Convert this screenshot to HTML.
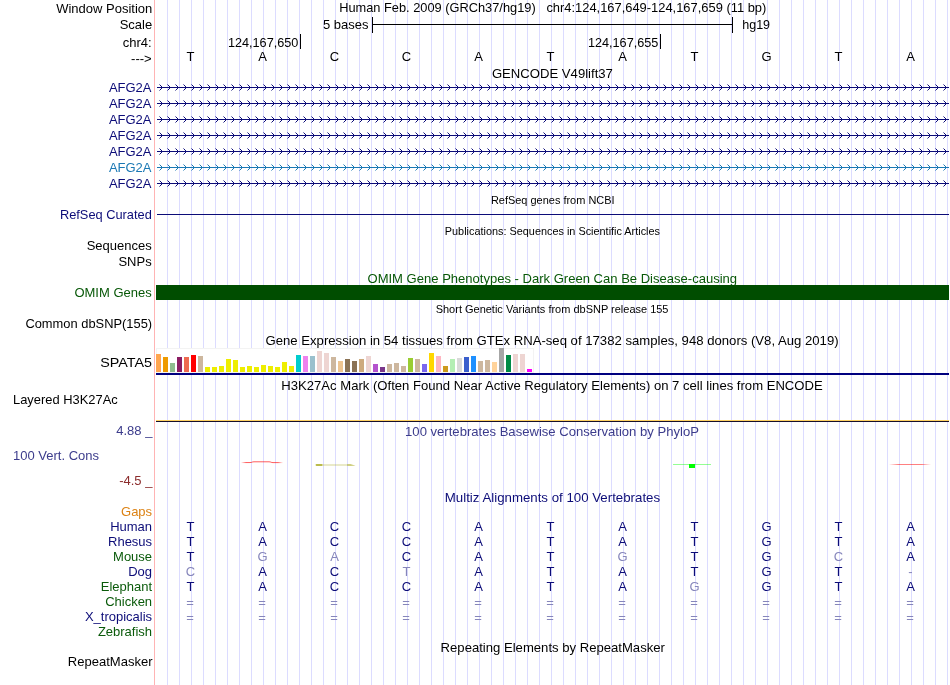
<!DOCTYPE html>
<html lang="en"><head><meta charset="utf-8"><title>UCSC Genome Browser chr4:124,167,649-124,167,659</title>
<style>
html,body{margin:0;padding:0;background:#fff;}
body{width:950px;height:685px;overflow:hidden;}
svg{display:block;will-change:transform;font-family:"Liberation Sans",Arial,Helvetica,sans-serif;font-size:13px;}
.g{fill:#dcdcff;shape-rendering:crispEdges;}
.c{shape-rendering:crispEdges;}
.r{text-anchor:end;}
.m{text-anchor:middle;}
.s{font-size:11px;}
</style></head><body>
<svg width="950" height="685" viewBox="0 0 950 685">
<rect width="950" height="685" fill="#fff"/>
<g class="g">
<rect x="167" y="0" width="1" height="685"/>
<rect x="179" y="0" width="1" height="685"/>
<rect x="191" y="0" width="1" height="685"/>
<rect x="203" y="0" width="1" height="685"/>
<rect x="215" y="0" width="1" height="685"/>
<rect x="227" y="0" width="1" height="685"/>
<rect x="239" y="0" width="1" height="685"/>
<rect x="251" y="0" width="1" height="685"/>
<rect x="263" y="0" width="1" height="685"/>
<rect x="275" y="0" width="1" height="685"/>
<rect x="287" y="0" width="1" height="685"/>
<rect x="299" y="0" width="1" height="685"/>
<rect x="311" y="0" width="1" height="685"/>
<rect x="323" y="0" width="1" height="685"/>
<rect x="335" y="0" width="1" height="685"/>
<rect x="347" y="0" width="1" height="685"/>
<rect x="359" y="0" width="1" height="685"/>
<rect x="371" y="0" width="1" height="685"/>
<rect x="383" y="0" width="1" height="685"/>
<rect x="395" y="0" width="1" height="685"/>
<rect x="407" y="0" width="1" height="685"/>
<rect x="419" y="0" width="1" height="685"/>
<rect x="431" y="0" width="1" height="685"/>
<rect x="443" y="0" width="1" height="685"/>
<rect x="455" y="0" width="1" height="685"/>
<rect x="467" y="0" width="1" height="685"/>
<rect x="479" y="0" width="1" height="685"/>
<rect x="491" y="0" width="1" height="685"/>
<rect x="503" y="0" width="1" height="685"/>
<rect x="515" y="0" width="1" height="685"/>
<rect x="527" y="0" width="1" height="685"/>
<rect x="539" y="0" width="1" height="685"/>
<rect x="551" y="0" width="1" height="685"/>
<rect x="563" y="0" width="1" height="685"/>
<rect x="575" y="0" width="1" height="685"/>
<rect x="587" y="0" width="1" height="685"/>
<rect x="599" y="0" width="1" height="685"/>
<rect x="611" y="0" width="1" height="685"/>
<rect x="623" y="0" width="1" height="685"/>
<rect x="635" y="0" width="1" height="685"/>
<rect x="647" y="0" width="1" height="685"/>
<rect x="659" y="0" width="1" height="685"/>
<rect x="671" y="0" width="1" height="685"/>
<rect x="683" y="0" width="1" height="685"/>
<rect x="695" y="0" width="1" height="685"/>
<rect x="707" y="0" width="1" height="685"/>
<rect x="719" y="0" width="1" height="685"/>
<rect x="731" y="0" width="1" height="685"/>
<rect x="743" y="0" width="1" height="685"/>
<rect x="755" y="0" width="1" height="685"/>
<rect x="767" y="0" width="1" height="685"/>
<rect x="779" y="0" width="1" height="685"/>
<rect x="791" y="0" width="1" height="685"/>
<rect x="803" y="0" width="1" height="685"/>
<rect x="815" y="0" width="1" height="685"/>
<rect x="827" y="0" width="1" height="685"/>
<rect x="839" y="0" width="1" height="685"/>
<rect x="851" y="0" width="1" height="685"/>
<rect x="863" y="0" width="1" height="685"/>
<rect x="875" y="0" width="1" height="685"/>
<rect x="887" y="0" width="1" height="685"/>
<rect x="899" y="0" width="1" height="685"/>
<rect x="911" y="0" width="1" height="685"/>
<rect x="923" y="0" width="1" height="685"/>
<rect x="935" y="0" width="1" height="685"/>
<rect x="947" y="0" width="1" height="685"/>
</g>
<rect class="c" x="154" y="0" width="1" height="685" fill="#ffb4b4"/>
<text class="r" x="152.3" y="13" fill="#000">Window Position</text>
<text class="r" x="152.2" y="29" fill="#000">Scale</text>
<text class="r" x="151.7" y="47" fill="#000">chr4:</text>
<text class="r" x="151.7" y="63" fill="#000">---&gt;</text>
<text x="339.2" y="12" fill="#000" textLength="196.5" lengthAdjust="spacingAndGlyphs">Human Feb. 2009 (GRCh37/hg19)</text>
<text x="546.4" y="12" fill="#000" textLength="219.9" lengthAdjust="spacingAndGlyphs">chr4:124,167,649-124,167,659 (11 bp)</text>
<text x="368.5" y="29" class="r">5 bases</text>
<text x="742.2" y="29" fill="#000" textLength="27.9" lengthAdjust="spacingAndGlyphs">hg19</text>
<g class="c" fill="#000">
<rect x="372" y="24" width="361" height="1"/>
<rect x="372" y="17" width="1" height="16"/>
<rect x="732" y="17" width="1" height="16"/>
<rect x="300" y="34" width="1" height="15"/>
<rect x="660" y="34" width="1" height="15"/>
</g>
<text x="227.9" y="47" fill="#000" textLength="70.5" lengthAdjust="spacingAndGlyphs">124,167,650</text>
<text x="587.9" y="47" fill="#000" textLength="70.5" lengthAdjust="spacingAndGlyphs">124,167,655</text>
<text class="m" x="190.5" y="61" fill="#000">T</text>
<text class="m" x="262.5" y="61" fill="#000">A</text>
<text class="m" x="334.5" y="61" fill="#000">C</text>
<text class="m" x="406.5" y="61" fill="#000">C</text>
<text class="m" x="478.5" y="61" fill="#000">A</text>
<text class="m" x="550.5" y="61" fill="#000">T</text>
<text class="m" x="622.5" y="61" fill="#000">A</text>
<text class="m" x="694.5" y="61" fill="#000">T</text>
<text class="m" x="766.5" y="61" fill="#000">G</text>
<text class="m" x="838.5" y="61" fill="#000">T</text>
<text class="m" x="910.5" y="61" fill="#000">A</text>
<text x="491.9" y="78" fill="#000" textLength="121.0" lengthAdjust="spacingAndGlyphs">GENCODE V49lift37</text>
<text class="r" x="151.5" y="92" fill="#0c0c78">AFG2A</text>
<rect class="c" x="157" y="87" width="792" height="1" fill="#0c0c78"/>
<path d="M159 84L162 87L159 90M167 84L170 87L167 90M175 84L178 87L175 90M183 84L186 87L183 90M191 84L194 87L191 90M199 84L202 87L199 90M207 84L210 87L207 90M215 84L218 87L215 90M223 84L226 87L223 90M231 84L234 87L231 90M239 84L242 87L239 90M247 84L250 87L247 90M255 84L258 87L255 90M263 84L266 87L263 90M271 84L274 87L271 90M279 84L282 87L279 90M287 84L290 87L287 90M295 84L298 87L295 90M303 84L306 87L303 90M311 84L314 87L311 90M319 84L322 87L319 90M327 84L330 87L327 90M335 84L338 87L335 90M343 84L346 87L343 90M351 84L354 87L351 90M359 84L362 87L359 90M367 84L370 87L367 90M375 84L378 87L375 90M383 84L386 87L383 90M391 84L394 87L391 90M399 84L402 87L399 90M407 84L410 87L407 90M415 84L418 87L415 90M423 84L426 87L423 90M431 84L434 87L431 90M439 84L442 87L439 90M447 84L450 87L447 90M455 84L458 87L455 90M463 84L466 87L463 90M471 84L474 87L471 90M479 84L482 87L479 90M487 84L490 87L487 90M495 84L498 87L495 90M503 84L506 87L503 90M511 84L514 87L511 90M519 84L522 87L519 90M527 84L530 87L527 90M535 84L538 87L535 90M543 84L546 87L543 90M551 84L554 87L551 90M559 84L562 87L559 90M567 84L570 87L567 90M575 84L578 87L575 90M583 84L586 87L583 90M591 84L594 87L591 90M599 84L602 87L599 90M607 84L610 87L607 90M615 84L618 87L615 90M623 84L626 87L623 90M631 84L634 87L631 90M639 84L642 87L639 90M647 84L650 87L647 90M655 84L658 87L655 90M663 84L666 87L663 90M671 84L674 87L671 90M679 84L682 87L679 90M687 84L690 87L687 90M695 84L698 87L695 90M703 84L706 87L703 90M711 84L714 87L711 90M719 84L722 87L719 90M727 84L730 87L727 90M735 84L738 87L735 90M743 84L746 87L743 90M751 84L754 87L751 90M759 84L762 87L759 90M767 84L770 87L767 90M775 84L778 87L775 90M783 84L786 87L783 90M791 84L794 87L791 90M799 84L802 87L799 90M807 84L810 87L807 90M815 84L818 87L815 90M823 84L826 87L823 90M831 84L834 87L831 90M839 84L842 87L839 90M847 84L850 87L847 90M855 84L858 87L855 90M863 84L866 87L863 90M871 84L874 87L871 90M879 84L882 87L879 90M887 84L890 87L887 90M895 84L898 87L895 90M903 84L906 87L903 90M911 84L914 87L911 90M919 84L922 87L919 90M927 84L930 87L927 90M935 84L938 87L935 90M943 84L946 87L943 90" transform="translate(0.5,0.5)" fill="none" stroke="#0c0c78" stroke-width="1"/>
<text class="r" x="151.5" y="108" fill="#0c0c78">AFG2A</text>
<rect class="c" x="157" y="103" width="792" height="1" fill="#0c0c78"/>
<path d="M159 100L162 103L159 106M167 100L170 103L167 106M175 100L178 103L175 106M183 100L186 103L183 106M191 100L194 103L191 106M199 100L202 103L199 106M207 100L210 103L207 106M215 100L218 103L215 106M223 100L226 103L223 106M231 100L234 103L231 106M239 100L242 103L239 106M247 100L250 103L247 106M255 100L258 103L255 106M263 100L266 103L263 106M271 100L274 103L271 106M279 100L282 103L279 106M287 100L290 103L287 106M295 100L298 103L295 106M303 100L306 103L303 106M311 100L314 103L311 106M319 100L322 103L319 106M327 100L330 103L327 106M335 100L338 103L335 106M343 100L346 103L343 106M351 100L354 103L351 106M359 100L362 103L359 106M367 100L370 103L367 106M375 100L378 103L375 106M383 100L386 103L383 106M391 100L394 103L391 106M399 100L402 103L399 106M407 100L410 103L407 106M415 100L418 103L415 106M423 100L426 103L423 106M431 100L434 103L431 106M439 100L442 103L439 106M447 100L450 103L447 106M455 100L458 103L455 106M463 100L466 103L463 106M471 100L474 103L471 106M479 100L482 103L479 106M487 100L490 103L487 106M495 100L498 103L495 106M503 100L506 103L503 106M511 100L514 103L511 106M519 100L522 103L519 106M527 100L530 103L527 106M535 100L538 103L535 106M543 100L546 103L543 106M551 100L554 103L551 106M559 100L562 103L559 106M567 100L570 103L567 106M575 100L578 103L575 106M583 100L586 103L583 106M591 100L594 103L591 106M599 100L602 103L599 106M607 100L610 103L607 106M615 100L618 103L615 106M623 100L626 103L623 106M631 100L634 103L631 106M639 100L642 103L639 106M647 100L650 103L647 106M655 100L658 103L655 106M663 100L666 103L663 106M671 100L674 103L671 106M679 100L682 103L679 106M687 100L690 103L687 106M695 100L698 103L695 106M703 100L706 103L703 106M711 100L714 103L711 106M719 100L722 103L719 106M727 100L730 103L727 106M735 100L738 103L735 106M743 100L746 103L743 106M751 100L754 103L751 106M759 100L762 103L759 106M767 100L770 103L767 106M775 100L778 103L775 106M783 100L786 103L783 106M791 100L794 103L791 106M799 100L802 103L799 106M807 100L810 103L807 106M815 100L818 103L815 106M823 100L826 103L823 106M831 100L834 103L831 106M839 100L842 103L839 106M847 100L850 103L847 106M855 100L858 103L855 106M863 100L866 103L863 106M871 100L874 103L871 106M879 100L882 103L879 106M887 100L890 103L887 106M895 100L898 103L895 106M903 100L906 103L903 106M911 100L914 103L911 106M919 100L922 103L919 106M927 100L930 103L927 106M935 100L938 103L935 106M943 100L946 103L943 106" transform="translate(0.5,0.5)" fill="none" stroke="#0c0c78" stroke-width="1"/>
<text class="r" x="151.5" y="124" fill="#0c0c78">AFG2A</text>
<rect class="c" x="157" y="119" width="792" height="1" fill="#0c0c78"/>
<path d="M159 116L162 119L159 122M167 116L170 119L167 122M175 116L178 119L175 122M183 116L186 119L183 122M191 116L194 119L191 122M199 116L202 119L199 122M207 116L210 119L207 122M215 116L218 119L215 122M223 116L226 119L223 122M231 116L234 119L231 122M239 116L242 119L239 122M247 116L250 119L247 122M255 116L258 119L255 122M263 116L266 119L263 122M271 116L274 119L271 122M279 116L282 119L279 122M287 116L290 119L287 122M295 116L298 119L295 122M303 116L306 119L303 122M311 116L314 119L311 122M319 116L322 119L319 122M327 116L330 119L327 122M335 116L338 119L335 122M343 116L346 119L343 122M351 116L354 119L351 122M359 116L362 119L359 122M367 116L370 119L367 122M375 116L378 119L375 122M383 116L386 119L383 122M391 116L394 119L391 122M399 116L402 119L399 122M407 116L410 119L407 122M415 116L418 119L415 122M423 116L426 119L423 122M431 116L434 119L431 122M439 116L442 119L439 122M447 116L450 119L447 122M455 116L458 119L455 122M463 116L466 119L463 122M471 116L474 119L471 122M479 116L482 119L479 122M487 116L490 119L487 122M495 116L498 119L495 122M503 116L506 119L503 122M511 116L514 119L511 122M519 116L522 119L519 122M527 116L530 119L527 122M535 116L538 119L535 122M543 116L546 119L543 122M551 116L554 119L551 122M559 116L562 119L559 122M567 116L570 119L567 122M575 116L578 119L575 122M583 116L586 119L583 122M591 116L594 119L591 122M599 116L602 119L599 122M607 116L610 119L607 122M615 116L618 119L615 122M623 116L626 119L623 122M631 116L634 119L631 122M639 116L642 119L639 122M647 116L650 119L647 122M655 116L658 119L655 122M663 116L666 119L663 122M671 116L674 119L671 122M679 116L682 119L679 122M687 116L690 119L687 122M695 116L698 119L695 122M703 116L706 119L703 122M711 116L714 119L711 122M719 116L722 119L719 122M727 116L730 119L727 122M735 116L738 119L735 122M743 116L746 119L743 122M751 116L754 119L751 122M759 116L762 119L759 122M767 116L770 119L767 122M775 116L778 119L775 122M783 116L786 119L783 122M791 116L794 119L791 122M799 116L802 119L799 122M807 116L810 119L807 122M815 116L818 119L815 122M823 116L826 119L823 122M831 116L834 119L831 122M839 116L842 119L839 122M847 116L850 119L847 122M855 116L858 119L855 122M863 116L866 119L863 122M871 116L874 119L871 122M879 116L882 119L879 122M887 116L890 119L887 122M895 116L898 119L895 122M903 116L906 119L903 122M911 116L914 119L911 122M919 116L922 119L919 122M927 116L930 119L927 122M935 116L938 119L935 122M943 116L946 119L943 122" transform="translate(0.5,0.5)" fill="none" stroke="#0c0c78" stroke-width="1"/>
<text class="r" x="151.5" y="140" fill="#0c0c78">AFG2A</text>
<rect class="c" x="157" y="135" width="792" height="1" fill="#0c0c78"/>
<path d="M159 132L162 135L159 138M167 132L170 135L167 138M175 132L178 135L175 138M183 132L186 135L183 138M191 132L194 135L191 138M199 132L202 135L199 138M207 132L210 135L207 138M215 132L218 135L215 138M223 132L226 135L223 138M231 132L234 135L231 138M239 132L242 135L239 138M247 132L250 135L247 138M255 132L258 135L255 138M263 132L266 135L263 138M271 132L274 135L271 138M279 132L282 135L279 138M287 132L290 135L287 138M295 132L298 135L295 138M303 132L306 135L303 138M311 132L314 135L311 138M319 132L322 135L319 138M327 132L330 135L327 138M335 132L338 135L335 138M343 132L346 135L343 138M351 132L354 135L351 138M359 132L362 135L359 138M367 132L370 135L367 138M375 132L378 135L375 138M383 132L386 135L383 138M391 132L394 135L391 138M399 132L402 135L399 138M407 132L410 135L407 138M415 132L418 135L415 138M423 132L426 135L423 138M431 132L434 135L431 138M439 132L442 135L439 138M447 132L450 135L447 138M455 132L458 135L455 138M463 132L466 135L463 138M471 132L474 135L471 138M479 132L482 135L479 138M487 132L490 135L487 138M495 132L498 135L495 138M503 132L506 135L503 138M511 132L514 135L511 138M519 132L522 135L519 138M527 132L530 135L527 138M535 132L538 135L535 138M543 132L546 135L543 138M551 132L554 135L551 138M559 132L562 135L559 138M567 132L570 135L567 138M575 132L578 135L575 138M583 132L586 135L583 138M591 132L594 135L591 138M599 132L602 135L599 138M607 132L610 135L607 138M615 132L618 135L615 138M623 132L626 135L623 138M631 132L634 135L631 138M639 132L642 135L639 138M647 132L650 135L647 138M655 132L658 135L655 138M663 132L666 135L663 138M671 132L674 135L671 138M679 132L682 135L679 138M687 132L690 135L687 138M695 132L698 135L695 138M703 132L706 135L703 138M711 132L714 135L711 138M719 132L722 135L719 138M727 132L730 135L727 138M735 132L738 135L735 138M743 132L746 135L743 138M751 132L754 135L751 138M759 132L762 135L759 138M767 132L770 135L767 138M775 132L778 135L775 138M783 132L786 135L783 138M791 132L794 135L791 138M799 132L802 135L799 138M807 132L810 135L807 138M815 132L818 135L815 138M823 132L826 135L823 138M831 132L834 135L831 138M839 132L842 135L839 138M847 132L850 135L847 138M855 132L858 135L855 138M863 132L866 135L863 138M871 132L874 135L871 138M879 132L882 135L879 138M887 132L890 135L887 138M895 132L898 135L895 138M903 132L906 135L903 138M911 132L914 135L911 138M919 132L922 135L919 138M927 132L930 135L927 138M935 132L938 135L935 138M943 132L946 135L943 138" transform="translate(0.5,0.5)" fill="none" stroke="#0c0c78" stroke-width="1"/>
<text class="r" x="151.5" y="156" fill="#0c0c78">AFG2A</text>
<rect class="c" x="157" y="151" width="792" height="1" fill="#0c0c78"/>
<path d="M159 148L162 151L159 154M167 148L170 151L167 154M175 148L178 151L175 154M183 148L186 151L183 154M191 148L194 151L191 154M199 148L202 151L199 154M207 148L210 151L207 154M215 148L218 151L215 154M223 148L226 151L223 154M231 148L234 151L231 154M239 148L242 151L239 154M247 148L250 151L247 154M255 148L258 151L255 154M263 148L266 151L263 154M271 148L274 151L271 154M279 148L282 151L279 154M287 148L290 151L287 154M295 148L298 151L295 154M303 148L306 151L303 154M311 148L314 151L311 154M319 148L322 151L319 154M327 148L330 151L327 154M335 148L338 151L335 154M343 148L346 151L343 154M351 148L354 151L351 154M359 148L362 151L359 154M367 148L370 151L367 154M375 148L378 151L375 154M383 148L386 151L383 154M391 148L394 151L391 154M399 148L402 151L399 154M407 148L410 151L407 154M415 148L418 151L415 154M423 148L426 151L423 154M431 148L434 151L431 154M439 148L442 151L439 154M447 148L450 151L447 154M455 148L458 151L455 154M463 148L466 151L463 154M471 148L474 151L471 154M479 148L482 151L479 154M487 148L490 151L487 154M495 148L498 151L495 154M503 148L506 151L503 154M511 148L514 151L511 154M519 148L522 151L519 154M527 148L530 151L527 154M535 148L538 151L535 154M543 148L546 151L543 154M551 148L554 151L551 154M559 148L562 151L559 154M567 148L570 151L567 154M575 148L578 151L575 154M583 148L586 151L583 154M591 148L594 151L591 154M599 148L602 151L599 154M607 148L610 151L607 154M615 148L618 151L615 154M623 148L626 151L623 154M631 148L634 151L631 154M639 148L642 151L639 154M647 148L650 151L647 154M655 148L658 151L655 154M663 148L666 151L663 154M671 148L674 151L671 154M679 148L682 151L679 154M687 148L690 151L687 154M695 148L698 151L695 154M703 148L706 151L703 154M711 148L714 151L711 154M719 148L722 151L719 154M727 148L730 151L727 154M735 148L738 151L735 154M743 148L746 151L743 154M751 148L754 151L751 154M759 148L762 151L759 154M767 148L770 151L767 154M775 148L778 151L775 154M783 148L786 151L783 154M791 148L794 151L791 154M799 148L802 151L799 154M807 148L810 151L807 154M815 148L818 151L815 154M823 148L826 151L823 154M831 148L834 151L831 154M839 148L842 151L839 154M847 148L850 151L847 154M855 148L858 151L855 154M863 148L866 151L863 154M871 148L874 151L871 154M879 148L882 151L879 154M887 148L890 151L887 154M895 148L898 151L895 154M903 148L906 151L903 154M911 148L914 151L911 154M919 148L922 151L919 154M927 148L930 151L927 154M935 148L938 151L935 154M943 148L946 151L943 154" transform="translate(0.5,0.5)" fill="none" stroke="#0c0c78" stroke-width="1"/>
<text class="r" x="151.5" y="172" fill="#1a78b4">AFG2A</text>
<rect class="c" x="157" y="167" width="792" height="1" fill="#1a78b4"/>
<path d="M159 164L162 167L159 170M167 164L170 167L167 170M175 164L178 167L175 170M183 164L186 167L183 170M191 164L194 167L191 170M199 164L202 167L199 170M207 164L210 167L207 170M215 164L218 167L215 170M223 164L226 167L223 170M231 164L234 167L231 170M239 164L242 167L239 170M247 164L250 167L247 170M255 164L258 167L255 170M263 164L266 167L263 170M271 164L274 167L271 170M279 164L282 167L279 170M287 164L290 167L287 170M295 164L298 167L295 170M303 164L306 167L303 170M311 164L314 167L311 170M319 164L322 167L319 170M327 164L330 167L327 170M335 164L338 167L335 170M343 164L346 167L343 170M351 164L354 167L351 170M359 164L362 167L359 170M367 164L370 167L367 170M375 164L378 167L375 170M383 164L386 167L383 170M391 164L394 167L391 170M399 164L402 167L399 170M407 164L410 167L407 170M415 164L418 167L415 170M423 164L426 167L423 170M431 164L434 167L431 170M439 164L442 167L439 170M447 164L450 167L447 170M455 164L458 167L455 170M463 164L466 167L463 170M471 164L474 167L471 170M479 164L482 167L479 170M487 164L490 167L487 170M495 164L498 167L495 170M503 164L506 167L503 170M511 164L514 167L511 170M519 164L522 167L519 170M527 164L530 167L527 170M535 164L538 167L535 170M543 164L546 167L543 170M551 164L554 167L551 170M559 164L562 167L559 170M567 164L570 167L567 170M575 164L578 167L575 170M583 164L586 167L583 170M591 164L594 167L591 170M599 164L602 167L599 170M607 164L610 167L607 170M615 164L618 167L615 170M623 164L626 167L623 170M631 164L634 167L631 170M639 164L642 167L639 170M647 164L650 167L647 170M655 164L658 167L655 170M663 164L666 167L663 170M671 164L674 167L671 170M679 164L682 167L679 170M687 164L690 167L687 170M695 164L698 167L695 170M703 164L706 167L703 170M711 164L714 167L711 170M719 164L722 167L719 170M727 164L730 167L727 170M735 164L738 167L735 170M743 164L746 167L743 170M751 164L754 167L751 170M759 164L762 167L759 170M767 164L770 167L767 170M775 164L778 167L775 170M783 164L786 167L783 170M791 164L794 167L791 170M799 164L802 167L799 170M807 164L810 167L807 170M815 164L818 167L815 170M823 164L826 167L823 170M831 164L834 167L831 170M839 164L842 167L839 170M847 164L850 167L847 170M855 164L858 167L855 170M863 164L866 167L863 170M871 164L874 167L871 170M879 164L882 167L879 170M887 164L890 167L887 170M895 164L898 167L895 170M903 164L906 167L903 170M911 164L914 167L911 170M919 164L922 167L919 170M927 164L930 167L927 170M935 164L938 167L935 170M943 164L946 167L943 170" transform="translate(0.5,0.5)" fill="none" stroke="#1a78b4" stroke-width="1"/>
<text class="r" x="151.5" y="188" fill="#0c0c78">AFG2A</text>
<rect class="c" x="157" y="183" width="792" height="1" fill="#0c0c78"/>
<path d="M159 180L162 183L159 186M167 180L170 183L167 186M175 180L178 183L175 186M183 180L186 183L183 186M191 180L194 183L191 186M199 180L202 183L199 186M207 180L210 183L207 186M215 180L218 183L215 186M223 180L226 183L223 186M231 180L234 183L231 186M239 180L242 183L239 186M247 180L250 183L247 186M255 180L258 183L255 186M263 180L266 183L263 186M271 180L274 183L271 186M279 180L282 183L279 186M287 180L290 183L287 186M295 180L298 183L295 186M303 180L306 183L303 186M311 180L314 183L311 186M319 180L322 183L319 186M327 180L330 183L327 186M335 180L338 183L335 186M343 180L346 183L343 186M351 180L354 183L351 186M359 180L362 183L359 186M367 180L370 183L367 186M375 180L378 183L375 186M383 180L386 183L383 186M391 180L394 183L391 186M399 180L402 183L399 186M407 180L410 183L407 186M415 180L418 183L415 186M423 180L426 183L423 186M431 180L434 183L431 186M439 180L442 183L439 186M447 180L450 183L447 186M455 180L458 183L455 186M463 180L466 183L463 186M471 180L474 183L471 186M479 180L482 183L479 186M487 180L490 183L487 186M495 180L498 183L495 186M503 180L506 183L503 186M511 180L514 183L511 186M519 180L522 183L519 186M527 180L530 183L527 186M535 180L538 183L535 186M543 180L546 183L543 186M551 180L554 183L551 186M559 180L562 183L559 186M567 180L570 183L567 186M575 180L578 183L575 186M583 180L586 183L583 186M591 180L594 183L591 186M599 180L602 183L599 186M607 180L610 183L607 186M615 180L618 183L615 186M623 180L626 183L623 186M631 180L634 183L631 186M639 180L642 183L639 186M647 180L650 183L647 186M655 180L658 183L655 186M663 180L666 183L663 186M671 180L674 183L671 186M679 180L682 183L679 186M687 180L690 183L687 186M695 180L698 183L695 186M703 180L706 183L703 186M711 180L714 183L711 186M719 180L722 183L719 186M727 180L730 183L727 186M735 180L738 183L735 186M743 180L746 183L743 186M751 180L754 183L751 186M759 180L762 183L759 186M767 180L770 183L767 186M775 180L778 183L775 186M783 180L786 183L783 186M791 180L794 183L791 186M799 180L802 183L799 186M807 180L810 183L807 186M815 180L818 183L815 186M823 180L826 183L823 186M831 180L834 183L831 186M839 180L842 183L839 186M847 180L850 183L847 186M855 180L858 183L855 186M863 180L866 183L863 186M871 180L874 183L871 186M879 180L882 183L879 186M887 180L890 183L887 186M895 180L898 183L895 186M903 180L906 183L903 186M911 180L914 183L911 186M919 180L922 183L919 186M927 180L930 183L927 186M935 180L938 183L935 186M943 180L946 183L943 186" transform="translate(0.5,0.5)" fill="none" stroke="#0c0c78" stroke-width="1"/>
<text class="s" x="490.9" y="204" fill="#000" textLength="123.7" lengthAdjust="spacingAndGlyphs">RefSeq genes from NCBI</text>
<text x="59.9" y="219" fill="#0c0c78" textLength="91.9" lengthAdjust="spacingAndGlyphs">RefSeq Curated</text>
<rect class="c" x="157" y="214" width="792" height="1" fill="#0c0c78"/>
<text class="s" x="444.8" y="235" fill="#000" textLength="215.2" lengthAdjust="spacingAndGlyphs">Publications: Sequences in Scientific Articles</text>
<text class="r" x="151.7" y="250" fill="#000">Sequences</text>
<text class="r" x="151.7" y="266" fill="#000">SNPs</text>
<text x="367.5" y="283" fill="#085808" textLength="369.6" lengthAdjust="spacingAndGlyphs">OMIM Gene Phenotypes - Dark Green Can Be Disease-causing</text>
<text class="r" x="151.7" y="297" fill="#085808">OMIM Genes</text>
<rect class="c" x="156" y="285" width="793" height="15" fill="#004d00"/>
<text class="s" x="435.7" y="313" fill="#000" textLength="232.8" lengthAdjust="spacingAndGlyphs">Short Genetic Variants from dbSNP release 155</text>
<text x="25.4" y="328" fill="#000" textLength="126.7" lengthAdjust="spacingAndGlyphs">Common dbSNP(155)</text>
<text x="265.5" y="345" fill="#000" textLength="573.1" lengthAdjust="spacingAndGlyphs">Gene Expression in 54 tissues from GTEx RNA-seq of 17382 samples, 948 donors (V8, Aug 2019)</text>
<text x="100.3" y="367" fill="#000" textLength="51.8" lengthAdjust="spacingAndGlyphs">SPATA5</text>
<rect class="c" x="156" y="348" width="378" height="25" fill="#f3f3f3"/>
<rect class="c" x="157" y="349" width="376" height="23" fill="#fff"/>
<g class="c">
<rect x="156" y="354" width="5" height="18" fill="#ffa54f"/>
<rect x="163" y="357" width="5" height="15" fill="#ee9a00"/>
<rect x="170" y="363" width="5" height="9" fill="#8fbc8f"/>
<rect x="177" y="357" width="5" height="15" fill="#8b1c62"/>
<rect x="184" y="357" width="5" height="15" fill="#ee6a50"/>
<rect x="191" y="355" width="5" height="17" fill="#ff0000"/>
<rect x="198" y="356" width="5" height="16" fill="#cdb79e"/>
<rect x="205" y="367" width="5" height="5" fill="#eeee00"/>
<rect x="212" y="367" width="5" height="5" fill="#eeee00"/>
<rect x="219" y="366" width="5" height="6" fill="#eeee00"/>
<rect x="226" y="359" width="5" height="13" fill="#eeee00"/>
<rect x="233" y="360" width="5" height="12" fill="#eeee00"/>
<rect x="240" y="367" width="5" height="5" fill="#eeee00"/>
<rect x="247" y="366" width="5" height="6" fill="#eeee00"/>
<rect x="254" y="367" width="5" height="5" fill="#eeee00"/>
<rect x="261" y="365" width="5" height="7" fill="#eeee00"/>
<rect x="268" y="366" width="5" height="6" fill="#eeee00"/>
<rect x="275" y="367" width="5" height="5" fill="#eeee00"/>
<rect x="282" y="362" width="5" height="10" fill="#eeee00"/>
<rect x="289" y="366" width="5" height="6" fill="#eeee00"/>
<rect x="296" y="355" width="5" height="17" fill="#00cdcd"/>
<rect x="303" y="356" width="5" height="16" fill="#ee82ee"/>
<rect x="310" y="356" width="5" height="16" fill="#9ac0cd"/>
<rect x="317" y="351" width="5" height="21" fill="#eed5d2"/>
<rect x="324" y="353" width="5" height="19" fill="#eed5d2"/>
<rect x="331" y="357" width="5" height="15" fill="#cdb79e"/>
<rect x="338" y="361" width="5" height="11" fill="#eec591"/>
<rect x="345" y="359" width="5" height="13" fill="#8b7355"/>
<rect x="352" y="361" width="5" height="11" fill="#8b7355"/>
<rect x="359" y="359" width="5" height="13" fill="#cdaa7d"/>
<rect x="366" y="356" width="5" height="16" fill="#eed5d2"/>
<rect x="373" y="364" width="5" height="8" fill="#b452cd"/>
<rect x="380" y="367" width="5" height="5" fill="#7a378b"/>
<rect x="387" y="364" width="5" height="8" fill="#cdb79e"/>
<rect x="394" y="363" width="5" height="9" fill="#cdb79e"/>
<rect x="401" y="366" width="5" height="6" fill="#cdb79e"/>
<rect x="408" y="358" width="5" height="14" fill="#9acd32"/>
<rect x="415" y="359" width="5" height="13" fill="#cdb79e"/>
<rect x="422" y="364" width="5" height="8" fill="#7a67ee"/>
<rect x="429" y="353" width="5" height="19" fill="#ffd700"/>
<rect x="436" y="356" width="5" height="16" fill="#ffb6c1"/>
<rect x="443" y="366" width="5" height="6" fill="#cd9b1d"/>
<rect x="450" y="359" width="5" height="13" fill="#b4eeb4"/>
<rect x="457" y="358" width="5" height="14" fill="#d9d9d9"/>
<rect x="464" y="357" width="5" height="15" fill="#3a5fcd"/>
<rect x="471" y="356" width="5" height="16" fill="#1e90ff"/>
<rect x="478" y="361" width="5" height="11" fill="#cdb79e"/>
<rect x="485" y="360" width="5" height="12" fill="#cdb79e"/>
<rect x="492" y="362" width="5" height="10" fill="#ffd39b"/>
<rect x="499" y="348" width="5" height="24" fill="#a6a6a6"/>
<rect x="506" y="355" width="5" height="17" fill="#008b45"/>
<rect x="513" y="354" width="5" height="18" fill="#eed5d2"/>
<rect x="520" y="354" width="5" height="18" fill="#eed5d2"/>
<rect x="527" y="369" width="5" height="3" fill="#ff00ff"/>
</g>
<rect class="c" x="156" y="373" width="793" height="2" fill="#00007f"/>
<text x="281.3" y="390" fill="#000" textLength="541.4" lengthAdjust="spacingAndGlyphs">H3K27Ac Mark (Often Found Near Active Regulatory Elements) on 7 cell lines from ENCODE</text>
<text x="13.0" y="404" fill="#000" textLength="104.7" lengthAdjust="spacingAndGlyphs">Layered H3K27Ac</text>
<rect class="c" x="156" y="420" width="793" height="1" fill="#ffd264"/>
<rect class="c" x="156" y="421" width="793" height="1" fill="#18102c"/>
<text x="405.1" y="436" fill="#3c3c8c" textLength="293.8" lengthAdjust="spacingAndGlyphs">100 vertebrates Basewise Conservation by PhyloP</text>
<text class="r" x="152.4" y="435" fill="#3c3c8c">4.88 _</text>
<text x="13" y="460" fill="#3c3c8c">100 Vert. Cons</text>
<text class="r" x="152.4" y="485" fill="#8c2d2d">-4.5 _</text>
<g class="c">
</g>
<defs><linearGradient id="rg" gradientUnits="userSpaceOnUse" x1="241" x2="283" y1="0" y2="0"><stop offset="0" stop-color="#f00" stop-opacity="0"/><stop offset="0.12" stop-color="#f00" stop-opacity="0.85"/><stop offset="0.88" stop-color="#f00" stop-opacity="0.85"/><stop offset="1" stop-color="#f00" stop-opacity="0"/></linearGradient></defs>
<path d="M241 462.55H250C252 462.55 252 461.8 254 461.8H269C271 461.8 271 462.6 273 462.6H283" fill="none" stroke="url(#rg)" stroke-width="0.75"/>
<g class="c">
</g>
<rect x="315.6" y="463.9" width="7" height="2.1" rx="0.9" fill="#a8a818" opacity="0.78"/>
<rect x="322.4" y="464" width="25" height="2" fill="#a8a818" opacity="0.24"/>
<path d="M347.2 464H350.5L355.6 465.7L350.5 466H347.2Z" fill="#a8a818" opacity="0.55"/>
<g class="c">
<rect x="673" y="464" width="38" height="1" fill="#00ff00" opacity="0.42"/>
<rect x="689" y="464" width="6" height="4" fill="#00ff00"/>
<defs><linearGradient id="rf" x1="0" x2="1" y1="0" y2="0"><stop offset="0" stop-color="#f00" stop-opacity="0"/><stop offset="0.22" stop-color="#f00" stop-opacity="0.5"/><stop offset="0.78" stop-color="#f00" stop-opacity="0.5"/><stop offset="1" stop-color="#f00" stop-opacity="0"/></linearGradient></defs>
<rect x="889" y="464" width="42" height="1" fill="url(#rf)"/>
</g>
<text x="444.8" y="502" fill="#0c0c78" textLength="215.3" lengthAdjust="spacingAndGlyphs">Multiz Alignments of 100 Vertebrates</text>
<text class="r" x="152.1" y="516" fill="#dc8214">Gaps</text>
<text class="r" x="152.1" y="531" fill="#0c0c78">Human</text>
<text class="m" x="190.5" y="531" fill="#0c0c78">T</text>
<text class="m" x="262.5" y="531" fill="#0c0c78">A</text>
<text class="m" x="334.5" y="531" fill="#0c0c78">C</text>
<text class="m" x="406.5" y="531" fill="#0c0c78">C</text>
<text class="m" x="478.5" y="531" fill="#0c0c78">A</text>
<text class="m" x="550.5" y="531" fill="#0c0c78">T</text>
<text class="m" x="622.5" y="531" fill="#0c0c78">A</text>
<text class="m" x="694.5" y="531" fill="#0c0c78">T</text>
<text class="m" x="766.5" y="531" fill="#0c0c78">G</text>
<text class="m" x="838.5" y="531" fill="#0c0c78">T</text>
<text class="m" x="910.5" y="531" fill="#0c0c78">A</text>
<text class="r" x="152.1" y="546" fill="#0c0c78">Rhesus</text>
<text class="m" x="190.5" y="546" fill="#0c0c78">T</text>
<text class="m" x="262.5" y="546" fill="#0c0c78">A</text>
<text class="m" x="334.5" y="546" fill="#0c0c78">C</text>
<text class="m" x="406.5" y="546" fill="#0c0c78">C</text>
<text class="m" x="478.5" y="546" fill="#0c0c78">A</text>
<text class="m" x="550.5" y="546" fill="#0c0c78">T</text>
<text class="m" x="622.5" y="546" fill="#0c0c78">A</text>
<text class="m" x="694.5" y="546" fill="#0c0c78">T</text>
<text class="m" x="766.5" y="546" fill="#0c0c78">G</text>
<text class="m" x="838.5" y="546" fill="#0c0c78">T</text>
<text class="m" x="910.5" y="546" fill="#0c0c78">A</text>
<text class="r" x="152.1" y="561" fill="#0a5a0a">Mouse</text>
<text class="m" x="190.5" y="561" fill="#0c0c78">T</text>
<text class="m" x="262.5" y="561" fill="#8686bb">G</text>
<text class="m" x="334.5" y="561" fill="#8686bb">A</text>
<text class="m" x="406.5" y="561" fill="#0c0c78">C</text>
<text class="m" x="478.5" y="561" fill="#0c0c78">A</text>
<text class="m" x="550.5" y="561" fill="#0c0c78">T</text>
<text class="m" x="622.5" y="561" fill="#8686bb">G</text>
<text class="m" x="694.5" y="561" fill="#0c0c78">T</text>
<text class="m" x="766.5" y="561" fill="#0c0c78">G</text>
<text class="m" x="838.5" y="561" fill="#8686bb">C</text>
<text class="m" x="910.5" y="561" fill="#0c0c78">A</text>
<text class="r" x="152.1" y="576" fill="#0c0c78">Dog</text>
<text class="m" x="190.5" y="576" fill="#8686bb">C</text>
<text class="m" x="262.5" y="576" fill="#0c0c78">A</text>
<text class="m" x="334.5" y="576" fill="#0c0c78">C</text>
<text class="m" x="406.5" y="576" fill="#8686bb">T</text>
<text class="m" x="478.5" y="576" fill="#0c0c78">A</text>
<text class="m" x="550.5" y="576" fill="#0c0c78">T</text>
<text class="m" x="622.5" y="576" fill="#0c0c78">A</text>
<text class="m" x="694.5" y="576" fill="#0c0c78">T</text>
<text class="m" x="766.5" y="576" fill="#0c0c78">G</text>
<text class="m" x="838.5" y="576" fill="#0c0c78">T</text>
<text class="m" x="910.5" y="576" fill="#8686bb">-</text>
<text class="r" x="152.1" y="591" fill="#0a5a0a">Elephant</text>
<text class="m" x="190.5" y="591" fill="#0c0c78">T</text>
<text class="m" x="262.5" y="591" fill="#0c0c78">A</text>
<text class="m" x="334.5" y="591" fill="#0c0c78">C</text>
<text class="m" x="406.5" y="591" fill="#0c0c78">C</text>
<text class="m" x="478.5" y="591" fill="#0c0c78">A</text>
<text class="m" x="550.5" y="591" fill="#0c0c78">T</text>
<text class="m" x="622.5" y="591" fill="#0c0c78">A</text>
<text class="m" x="694.5" y="591" fill="#8686bb">G</text>
<text class="m" x="766.5" y="591" fill="#0c0c78">G</text>
<text class="m" x="838.5" y="591" fill="#0c0c78">T</text>
<text class="m" x="910.5" y="591" fill="#0c0c78">A</text>
<text class="r" x="152.1" y="606" fill="#0a5a0a">Chicken</text>
<text class="m" x="190.1" y="607" fill="#8686bb">=</text>
<text class="m" x="262.1" y="607" fill="#8686bb">=</text>
<text class="m" x="334.1" y="607" fill="#8686bb">=</text>
<text class="m" x="406.1" y="607" fill="#8686bb">=</text>
<text class="m" x="478.1" y="607" fill="#8686bb">=</text>
<text class="m" x="550.1" y="607" fill="#8686bb">=</text>
<text class="m" x="622.1" y="607" fill="#8686bb">=</text>
<text class="m" x="694.1" y="607" fill="#8686bb">=</text>
<text class="m" x="766.1" y="607" fill="#8686bb">=</text>
<text class="m" x="838.1" y="607" fill="#8686bb">=</text>
<text class="m" x="910.1" y="607" fill="#8686bb">=</text>
<text class="r" x="152.1" y="621" fill="#0c0c78">X_tropicalis</text>
<text class="m" x="190.1" y="622" fill="#8686bb">=</text>
<text class="m" x="262.1" y="622" fill="#8686bb">=</text>
<text class="m" x="334.1" y="622" fill="#8686bb">=</text>
<text class="m" x="406.1" y="622" fill="#8686bb">=</text>
<text class="m" x="478.1" y="622" fill="#8686bb">=</text>
<text class="m" x="550.1" y="622" fill="#8686bb">=</text>
<text class="m" x="622.1" y="622" fill="#8686bb">=</text>
<text class="m" x="694.1" y="622" fill="#8686bb">=</text>
<text class="m" x="766.1" y="622" fill="#8686bb">=</text>
<text class="m" x="838.1" y="622" fill="#8686bb">=</text>
<text class="m" x="910.1" y="622" fill="#8686bb">=</text>
<text class="r" x="152.1" y="636" fill="#0a5a0a">Zebrafish</text>
<text x="440.6" y="652" fill="#000" textLength="224.3" lengthAdjust="spacingAndGlyphs">Repeating Elements by RepeatMasker</text>
<text x="67.8" y="666" fill="#000" textLength="84.8" lengthAdjust="spacingAndGlyphs">RepeatMasker</text>
</svg></body></html>
